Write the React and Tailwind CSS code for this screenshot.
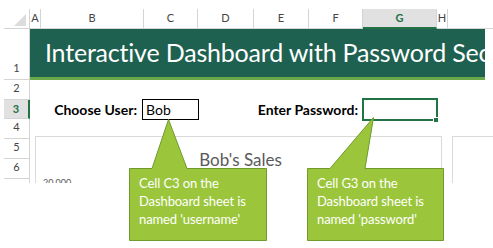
import React from "react";

// Spreadsheet columns shown at the top (width includes the right gridline)
const columns = [
  { name: "A", w: "w-[11px]" },
  { name: "B", w: "w-[103px]" },
  { name: "C", w: "w-[54px]" },
  { name: "D", w: "w-[56px]" },
  { name: "E", w: "w-[55px]" },
  { name: "F", w: "w-[54px]" },
  { name: "G", w: "w-[74px]", active: true },
  { name: "H", w: "w-[11px]" },
];

const rows = [
  { n: "1", h: "h-[51px]" },
  { n: "2", h: "h-[20px]" },
  { n: "3", h: "h-[19px]", active: true },
  { n: "4", h: "h-[20px]" },
  { n: "5", h: "h-[20px]" },
  { n: "6", h: "h-[20px]" },
  { n: "", h: "h-[20px]" },
];

function ColumnHeader() {
  return (
    <div className="flex h-[20px] ml-[4px] border-b border-[#d4d4d4]">
      <div className="w-[26px] border-r border-[#d4d4d4] relative">
        <svg className="absolute left-[10px] top-[5px]" width="12" height="12" viewBox="0 0 12 12">
          <polygon points="12,0 12,12 0,12" fill="#dcdcdc" />
        </svg>
      </div>
      {columns.map((c) => (
        <div
          key={c.name}
          className={
            c.active
              ? `${c.w} flex items-center justify-center bg-[#e1e1e1] border-r border-[#d4d4d4] border-b-2 border-b-[#217346] text-[#217346] font-bold -mb-[1px]`
              : `${c.w} flex items-center justify-center border-r border-[#d4d4d4] text-[#444]`
          }
        >
          {c.name}
        </div>
      ))}
    </div>
  );
}

function RowHeader() {
  return (
    <div className="w-[26px] ml-[4px] border-r border-[#d4d4d4] shrink-0">
      {rows.map((r, i) => (
        <div
          key={i}
          className={
            r.active
              ? `${r.h} flex items-center justify-center bg-[#e1e1e1] border-b border-[#d4d4d4] border-r-2 border-r-[#217346] -mr-[1px] text-[#217346] font-bold`
              : `${r.h} flex items-end justify-center pb-[3px] border-b border-[#d4d4d4] text-[#444]`
          }
        >
          {r.n}
        </div>
      ))}
    </div>
  );
}

function Callout({ text, className }) {
  return (
    <div className={`absolute text-white text-[13px] leading-[18px] tracking-[-0.1px] ${className}`}>
      {text.map((t) => (
        <div key={t}>{t}</div>
      ))}
    </div>
  );
}

export default function App() {
  return (
    <div className="relative w-[493px] h-[248px] bg-white overflow-hidden font-['Lato','Open_Sans',sans-serif]">
      {/* Sheet area, cut off below row 6 */}
      <div className="h-[183px] overflow-hidden pt-[9px] text-[11px]">
        <ColumnHeader />
        <div className="flex">
          <RowHeader />
          <div className="flex-1 text-[14px]">
            {/* Title band */}
            <div className="w-[455px] h-[51px] flex flex-col">
              <div className="h-[48px] bg-[#1f6150] overflow-hidden whitespace-nowrap flex items-center pl-[15px] text-white text-[25px] tracking-[-0.2px]">
                Interactive Dashboard with Password Security
              </div>
              <div className="h-[3px] bg-[#6aa84a]" />
            </div>
            {/* Row 3 inputs */}
            <div className="flex items-center mt-[19px] h-[21px]">
              <div className="w-[113px] text-right pr-[6px] font-bold text-black">Choose User:</div>
              <div className="w-[57px] h-[21px] border border-black -ml-[1px] flex items-center pl-[3px] text-black">
                Bob
              </div>
              <div className="w-[164px] text-right pr-[5px] font-bold text-black">Enter Password:</div>
              <div className="relative w-[76px] h-[23px] -ml-[1px] border-2 border-[#217346]">
                <div className="absolute -right-[3px] -bottom-[4px] w-[6px] h-[6px] bg-[#217346] border border-white" />
              </div>
            </div>
          </div>
        </div>
      </div>

      {/* Charts (floating objects) */}
      <div className="absolute left-[35px] top-[136px] w-[407px] h-[60px] border border-[#d9d9d9]">
        <div className="text-center text-[#595959] text-[17px] mt-[10px] pl-[4px]">Bob's Sales</div>
        <div className="absolute left-[7px] top-[39px] text-[9px] text-[#595959]">20,000</div>
      </div>
      <div className="absolute left-[452px] top-[136px] w-[60px] h-[60px] border border-[#d9d9d9]" />
      <div className="absolute left-0 top-[183px] w-full h-[65px] bg-white" />

      {/* Callout shapes */}
      <svg className="absolute left-0 top-0 pointer-events-none" width="493" height="248" viewBox="0 0 493 248">
        <path
          d="M129.5,168.5 L152,168.5 L168.5,119.5 L187,168.5 L266.5,168.5 L266.5,240.5 L129.5,240.5 Z"
          fill="#9bc63b"
          stroke="#6f9a2c"
          strokeWidth="1"
        />
        <path
          d="M307.5,168.5 L330,168.5 L373.5,117.5 L365,168.5 L443.5,168.5 L443.5,240.5 L307.5,240.5 Z"
          fill="#9bc63b"
          stroke="#6f9a2c"
          strokeWidth="1"
        />
      </svg>
      <Callout className="left-[139px] top-[174px]" text={["Cell C3 on the", "Dashboard sheet is", "named 'username'"]} />
      <Callout className="left-[317px] top-[174px]" text={["Cell G3 on the", "Dashboard sheet is", "named 'password'"]} />
    </div>
  );
}
